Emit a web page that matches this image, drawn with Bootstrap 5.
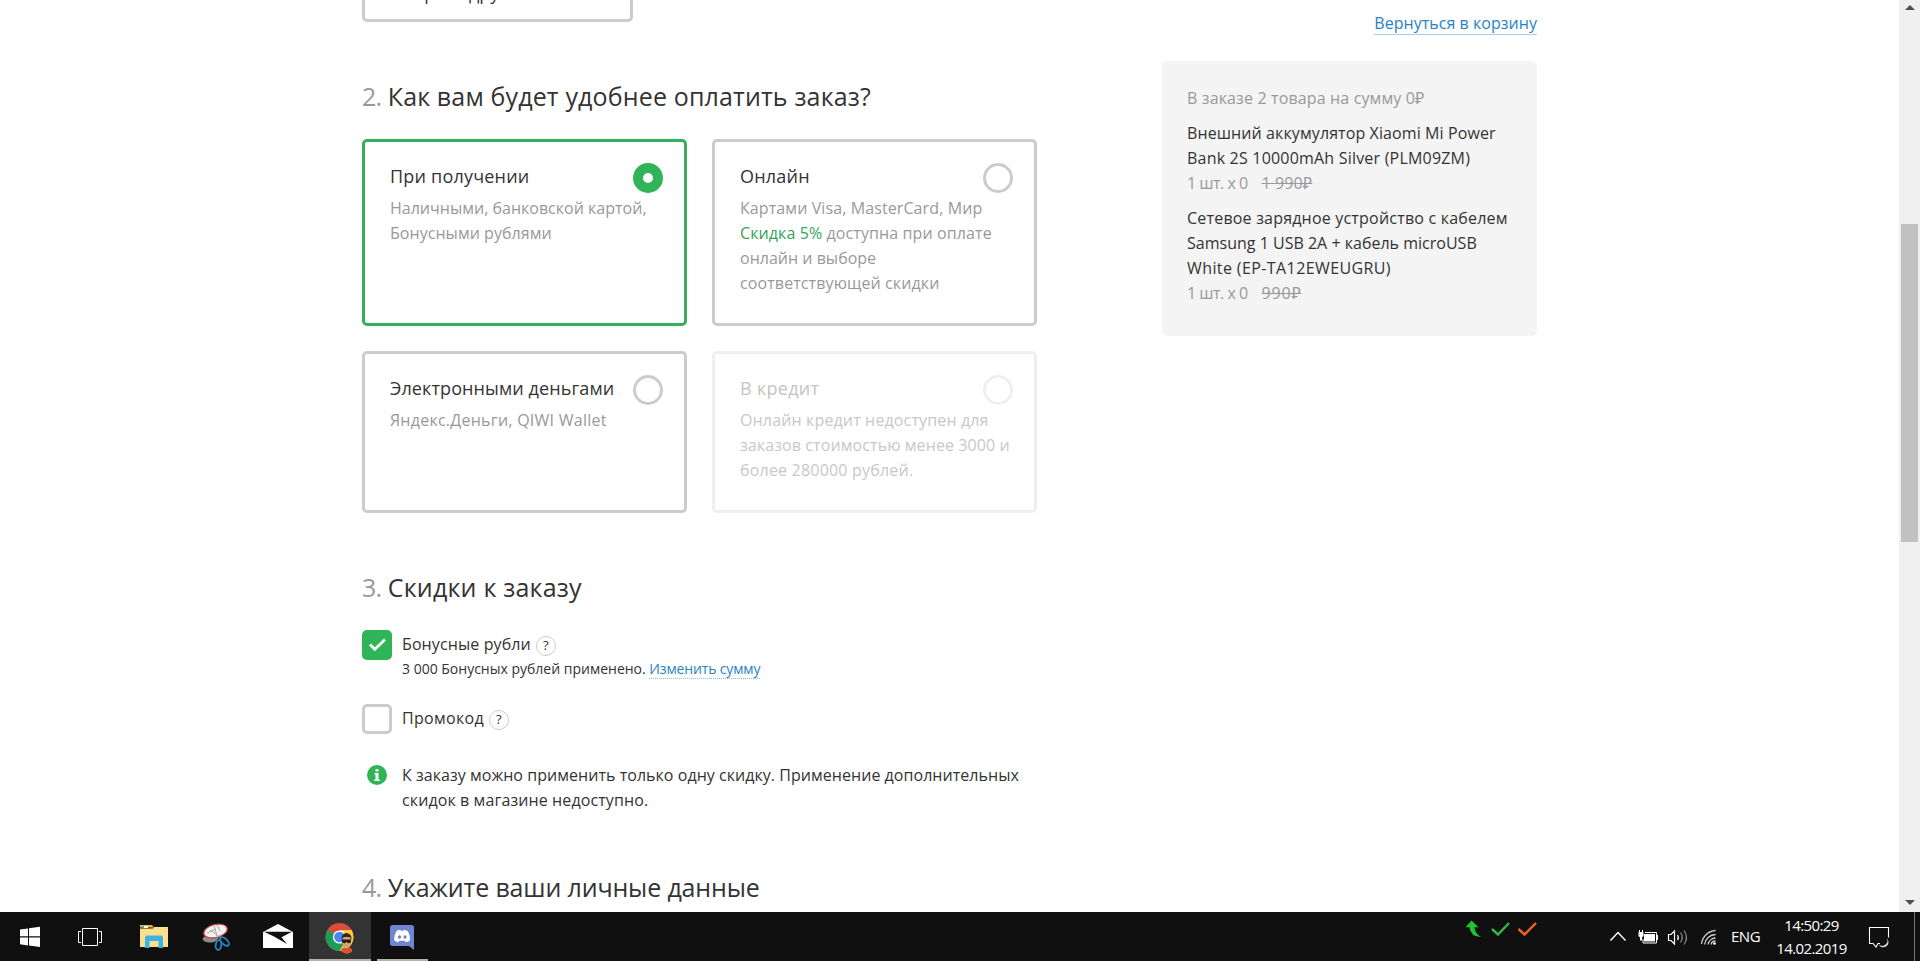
<!DOCTYPE html>
<html lang="ru">
<head>
<meta charset="utf-8">
<meta name="viewport" content="width=device-width, initial-scale=1">
<title>Оформление заказа</title>
<link href="https://cdn.jsdelivr.net/npm/bootstrap@5.3.0/dist/css/bootstrap.min.css" rel="stylesheet">
<style>
  body { font-family: "Open Sans", "Noto Sans", sans-serif; font-size: 16px; line-height: 25px; color: #333; background: #fff; }
  .desktop { height: 961px; width: 1920px; }
  .checkout { width: 1175px; margin-left: 362px; }
  .form-col { width: 675px; }
  .side-col { width: 375px; }

  .other-shop { width: 271px; height: 60px; margin-top: -38px; border: 3px solid #ccc; border-radius: 5px; padding: 16px 20px 0 23px; font-size: 18px; font-weight: 500; }
  .step { font-size: 25px; line-height: 33px; font-weight: 400; margin: 0; white-space: nowrap; }
  .step-no { color: #999; letter-spacing: -.8px; }
  .step-pay { margin-top: 58px; margin-bottom: 26px; }
  .step-sale { margin-top: 58px; margin-bottom: 26px; }
  .step-me { margin-top: 59px; }

  .pay-grid { display: grid; grid-template-columns: 325px 325px; grid-template-rows: 187px 162px; gap: 25px; }
  .pay { border: 3px solid #ccc; border-radius: 5px; padding: 22px 21px 0 25px; color: #999; background: #fff; white-space: nowrap; }
  .pay-title { font-size: 18px; color: #333; margin-bottom: 7px; height: 25px; }
  .pay-on { border-color: #36ae5c; }
  .pay-off { border-color: #efefef; color: #c8c8c8; }
  .pay-off .pay-title { color: #c4c4c4; }
  .pay-off .dot { border-color: #efefef; }
  .dot { width: 30px; height: 30px; border: 3px solid #ccc; border-radius: 50%; margin-top: -1px; flex: none; }
  .pay-on .dot { border: 10px solid #2fb457; }

  .tick { width: 30px; height: 30px; border: 3px solid #ccc; border-radius: 5px; flex: none; margin-right: 10px; }
  .tick svg { display: block; }
  .tick-on { background: #2fb457; border-color: #2fb457; }
  .tick-label { padding-top: 2px; }
  .help { width: 20px; height: 20px; border: 1px solid #ccc; border-radius: 50%; font-size: 13px; line-height: 17px; text-align: center; margin: 6px 0 0 5px; }
  .note { font-size: 14px; line-height: 20px; margin-top: 2px; white-space: nowrap; }
  .sum-link { color: #2a82c4; text-decoration: none; border-bottom: 1px dotted #8fbfe2; display: inline-block; line-height: 18px; }
  .cart-line { height: 35px; }
  .cart-link { color: #2a82c4; text-decoration: none; border-bottom: 1px solid #a9d1ec; display: inline-block; line-height: 22px; margin-top: 12px; }
  .info-ico { margin: 4px 15px 0 5px; flex: none; }
  .info-text { padding-top: 2px; height: 51px; }
  .sale-row { height: 74px; }
  .promo-row { height: 57px; }

  .order { background: #f4f4f4; border-radius: 5px; height: 275px; margin-top: 26px; padding: 25px 25px 0; white-space: nowrap; }
  .order p { margin: 0 0 10px; }
  .dim { color: #999; }
  .old { text-decoration: line-through; margin-left: 14px; }
  .green { color: #36a35a; }

  .ls-n4 { letter-spacing: -.4px; } .ls-n5 { letter-spacing: -.5px; } .ls-n6 { letter-spacing: -.6px; } .ls-n15 { letter-spacing: -.15px; } .ls-0 { letter-spacing: .01px; }
  .ls-05 { letter-spacing: .04px; } .ls-10 { letter-spacing: .1px; } .ls-15 { letter-spacing: .14px; }
  .ls-20 { letter-spacing: .2px; } .ls-25 { letter-spacing: .25px; } .ls-30 { letter-spacing: .3px; }
  .ls-40 { letter-spacing: .4px; } .ls-80 { letter-spacing: .8px; }

  .scroller { width: 21px; background: #f0f0f0; flex: none; }
  .thumb { width: 17px; height: 318px; background: #c1c1c1; margin: 214px 2px 0; }
  .arrow-up { border: 5px solid transparent; border-top: 0; border-bottom-color: #505050; height: 5px; margin-top: 5px; }
  .arrow-down { border: 5px solid transparent; border-bottom: 0; border-top-color: #505050; height: 5px; margin: auto 0 7px; }

  .taskbar { height: 49px; background: #101010; color: #fff; font-size: 15px; line-height: 23px; flex: none; }
  .taskbar svg { flex: none; display: block; }
  .app-on { background: #333; }
  .lang { width: 43px; padding: 13px 0 0 1px; }
  .clock { width: 77px; padding-top: 2px; text-align: center; white-space: nowrap; }
  .bell { margin: 0 7px; }
  .peek { border-left: 1px solid #777; width: 6px; }
</style>
</head>
<body>
<div class="desktop d-flex flex-column overflow-hidden">
  <div class="d-flex flex-grow-1 overflow-hidden">
    <main class="flex-grow-1">
      <div class="checkout d-flex justify-content-between">
        <div class="form-col">
          <div class="other-shop">Выбрать другой</div>

          <h2 class="step step-pay"><span class="step-no">2.</span> <span class="ls-15">Как вам будет удобнее оплатить заказ?</span></h2>
          <div class="pay-grid">
            <div class="pay pay-on">
              <div class="pay-title d-flex justify-content-between"><span class="ls-20">При получении</span><span class="dot"></span></div>
              <div class="ls-0">Наличными, банковской картой,</div>
              <div class="ls-05">Бонусными рублями</div>
            </div>
            <div class="pay">
              <div class="pay-title d-flex justify-content-between"><span class="ls-20">Онлайн</span><span class="dot"></span></div>
              <div class="ls-10">Картами Visa, MasterCard, Мир</div>
              <div class="ls-10"><span class="green">Скидка 5%</span> доступна при оплате</div>
              <div class="ls-0">онлайн и выборе</div>
              <div class="ls-10">соответствующей скидки</div>
            </div>
            <div class="pay">
              <div class="pay-title d-flex justify-content-between"><span class="ls-10">Электронными деньгами</span><span class="dot"></span></div>
              <div class="ls-25">Яндекс.Деньги, QIWI Wallet</div>
            </div>
            <div class="pay pay-off">
              <div class="pay-title d-flex justify-content-between"><span class="ls-30">В кредит</span><span class="dot"></span></div>
              <div class="ls-15">Онлайн кредит недоступен для</div>
              <div class="ls-10">заказов стоимостью менее 3000 и</div>
              <div class="ls-20">более 280000 рублей.</div>
            </div>
          </div>

          <h2 class="step step-sale"><span class="step-no">3.</span> <span class="ls-20">Скидки к заказу</span></h2>
          <div class="d-flex sale-row">
            <div class="tick tick-on">
              <svg width="24" height="24" viewBox="0 0 24 24" fill="none" stroke="#fff" stroke-width="2.800"><path d="M5 11.500l4.800 4.700L20 6.500"/></svg>
            </div>
            <div>
              <div class="d-flex"><span class="tick-label ls-10">Бонусные рубли</span><span class="help">?</span></div>
              <div class="note">3 000 Бонусных рублей применено. <a href="#" class="sum-link ls-n15">Изменить сумму</a></div>
            </div>
          </div>
          <div class="d-flex promo-row">
            <div class="tick"></div>
            <div class="d-flex"><span class="tick-label ls-30">Промокод</span><span class="help">?</span></div>
          </div>
          <div class="d-flex text-nowrap">
            <svg class="info-ico" width="20" height="20" viewBox="0 0 20 20"><circle cx="10" cy="10" r="10" fill="#2fb457"/><path fill="#fff" d="M8.500 4h3v2.500h-3zM7.500 8h4v6.500h1.300v1.500H7.200v-1.500h1.300v-5h-1z"/></svg>
            <div class="info-text">
              <div class="ls-05">К заказу можно применить только одну скидку. Применение дополнительных</div>
              <div class="ls-10">скидок в магазине недоступно.</div>
            </div>
          </div>

          <h2 class="step step-me"><span class="step-no">4.</span> <span class="ls-n15">Укажите ваши личные данные</span></h2>
        </div>

        <aside class="side-col">
          <div class="text-end cart-line"><a href="#" class="cart-link ls-05">Вернуться в корзину</a></div>
          <div class="order">
            <p class="dim ls-15">В заказе 2 товара на сумму 0₽</p>
            <p>
              <span class="ls-10">Внешний аккумулятор Xiaomi Mi Power</span><br>
              <span class="ls-20">Bank 2S 10000mAh Silver (PLM09ZM)</span><br>
              <span class="dim"><span class="ls-n5">1 шт. x 0</span><span class="old ls-10">1 990₽</span></span>
            </p>
            <p>
              <span class="ls-20">Сетевое зарядное устройство с кабелем</span><br>
              <span class="ls-0">Samsung 1 USB 2A + кабель microUSB</span><br>
              <span class="ls-40">White (EP-TA12EWEUGRU)</span><br>
              <span class="dim"><span class="ls-n5">1 шт. x 0</span><span class="old ls-80">990₽</span></span>
            </p>
          </div>
        </aside>
      </div>
    </main>
    <div class="scroller d-flex flex-column align-items-center">
      <div class="arrow-up"></div>
      <div class="thumb"></div>
      <div class="arrow-down"></div>
    </div>
  </div>

  <footer class="taskbar d-flex">
    <svg width="60" height="49" viewBox="0 912 60 49"><path fill="#fff" d="M20 929.500l8-1.100v7.900h-8zM29 928.200l11-1.500v9.600H29zM20 937.500h8v7.900l-8-1.100zM29 937.500h11v9.600l-11-1.500z"/></svg>
    <svg width="63" height="49" viewBox="60 912 63 49" fill="none" stroke="#fff" stroke-width="1"><path d="M82.500 928.500h15v17h-15zM81 931.500h-2.500v11H81M99 931.500h2.500v11H99"/></svg>
    <svg width="62" height="49" viewBox="123 912 62 49"><path fill="#e9b63b" d="M140 925h12l2 2.500h-14z"/><path fill="#fbe08c" d="M140 928.500h13l1-1.500h14v20h-28z"/><path fill="#fff" d="M142 926h6v2h-6z"/><path fill="#3aa7d8" d="M142 926h2v2h-2z"/><path fill="#3fb2e3" d="M145 948v-11l1.500-1.500h15L163 937v11h-4.500v-7h-9v7z"/></svg>
    <svg width="62" height="49" viewBox="185 912 62 49"><ellipse cx="210" cy="939" rx="7.500" ry="3.500" fill="#8d8d8d"/><ellipse cx="215.500" cy="931" rx="12" ry="6.500" fill="#f1f1f1" stroke="#cc3b3b" stroke-width="1.200" transform="rotate(-14 215.500 931)"/><path d="M207 933l9-4M214 926l4 13M210 930l11 8M217 925l3 6" stroke="#aaa" fill="none"/><g fill="none" stroke="#2489c8" stroke-width="1.800"><ellipse cx="218.500" cy="945" rx="2.800" ry="5" transform="rotate(8 218.500 945)"/><ellipse cx="224.500" cy="941.500" rx="2.800" ry="5.500" transform="rotate(-48 224.500 941.500)"/></g></svg>
    <svg width="62" height="49" viewBox="247 912 62 49"><path fill="#fff" d="M263 932l15-8 15 8v16h-30z"/><path fill="#101010" d="M264 931.700h28l-10.500 5.500 5.500 6.800-13-7.500z"/></svg>
    <svg class="app-on" width="62" height="49" viewBox="309.500 912 62 49"><circle cx="340" cy="937" r="14" fill="#dd4b3e"/><path fill="#1c9d58" d="M327.900 930A14 14 0 0 0 340 951l6-10.500-6-3.500z"/><path fill="#fccd41" d="M340 951a14 14 0 0 0 12.100-21H340l6 10.500z"/><circle cx="340" cy="937" r="6.600" fill="#fff"/><circle cx="340" cy="937" r="5.300" fill="#4b86ee"/><path fill="#d9542f" d="M342 949q5-4 10.500 0v3l-5 2-5.500-2z"/><ellipse cx="347" cy="942" rx="4.300" ry="6.500" fill="#d8a075"/><path fill="#33251f" d="M342 940q0-7 5-7 5.500.500 5 7l-2-3h-6z"/><path fill="#201c1c" d="M342.500 939.500h9v3l-3 .8-1.500-1.500-1.500 1.500-3-.8z"/><path fill="#b7b0a9" d="M309.500 959h62v2h-62z"/></svg>
    <svg width="62" height="49" viewBox="371 912 62 49"><path fill="#6f85d2" d="M392.500 925h19a2.500 2.500 0 0 1 2.500 2.500V950l-5-4h-16.500a2.500 2.500 0 0 1-2.500-2.500v-16a2.500 2.500 0 0 1 2.500-2.500z"/><path fill="#fff" d="M396.500 931q2-1.200 3.800-1.300l.6 1.100h2.400l.6-1.100q2 .2 3.800 1.300 2.600 4 2.500 9-1.800 2-4.300 2.200l-1-1.500h-5.600l-1 1.500q-2.600-.3-4.300-2.200 0-5 2.500-9z"/><circle cx="399.500" cy="937" r="1.700" fill="#6f85d2"/><circle cx="405" cy="937" r="1.700" fill="#6f85d2"/><path fill="#b7b0a9" d="M377 959h51v2h-51z"/></svg>

    <svg class="ms-auto" width="290" height="49" viewBox="1440 912 290 49" fill="none">
      <path fill="#1fc433" d="M1471.500 920.500l7 6.800h-4q.5 6.500 6.500 9.700-10.500 0-11.500-9.700h-4z"/>
      <path stroke="#35b64a" stroke-width="2.400" d="M1492 929l6 5.500 11-11.500"/>
      <path stroke="#f0622b" stroke-width="2.400" d="M1518.500 929l6 5.500 11.500-11.500"/>
      <path stroke="#fff" stroke-width="1.400" d="M1610.500 940.500l7.500-8 7.500 8"/>
      <path fill="#fff" d="M1644 934h11v7.500h-11z"/><path stroke="#fff" d="M1645 932.500h11.500v10.500h-13.500v-4M1657.500 935v5"/>
      <path fill="#fff" d="M1638.500 932h5v4l-1.500 1.500v3h-2v-3l-1.500-1.500zM1639 930h1v2h-1zM1642 930h1v2h-1z"/>
      <path stroke="#fff" stroke-width="1.200" d="M1668.500 934.500h2.500l3.500-3.500v13l-3.500-3.500h-2.500zM1677.500 935q1.800 2.500 0 5"/><path stroke="#8a8a8a" stroke-width="1.200" d="M1680.500 932.500q3.500 5 0 10M1684 930.500q5 7 0 14"/>
      <g stroke="#ccc" stroke-width="1.300"><path d="M1701.500 944a15 15 0 0 1 14-13.500M1704.500 944.500a11.500 11.500 0 0 1 11-10M1708 944.500a8 8 0 0 1 7.500-6.500M1711 944.500a4.500 4.500 0 0 1 4.500-3.500"/></g><circle cx="1714.500" cy="943.500" r="1.300" fill="#fff"/>
    </svg>
    <div class="lang ls-n5">ENG</div>
    <div class="clock ls-n6">14:50:29<br>14.02.2019</div>
    <svg class="bell" width="50" height="49" viewBox="1857 912 50 49" fill="none" stroke="#fff" stroke-width="1.100"><path d="M1880 943.500h-2l-2 3.500-3-3.500h-3.500v-16h19v10"/><path fill="#dcdcdc" stroke="none" d="M1886.500 938a5 5 0 0 1-7.500 6.500q1 3 4.500 2.800 5-.8 5-5.300-.2-2.500-2-4z"/></svg>
    <div class="peek"></div>
  </footer>
</div>
<script src="https://cdn.jsdelivr.net/npm/bootstrap@5.3.0/dist/js/bootstrap.bundle.min.js"></script>
</body>
</html>
